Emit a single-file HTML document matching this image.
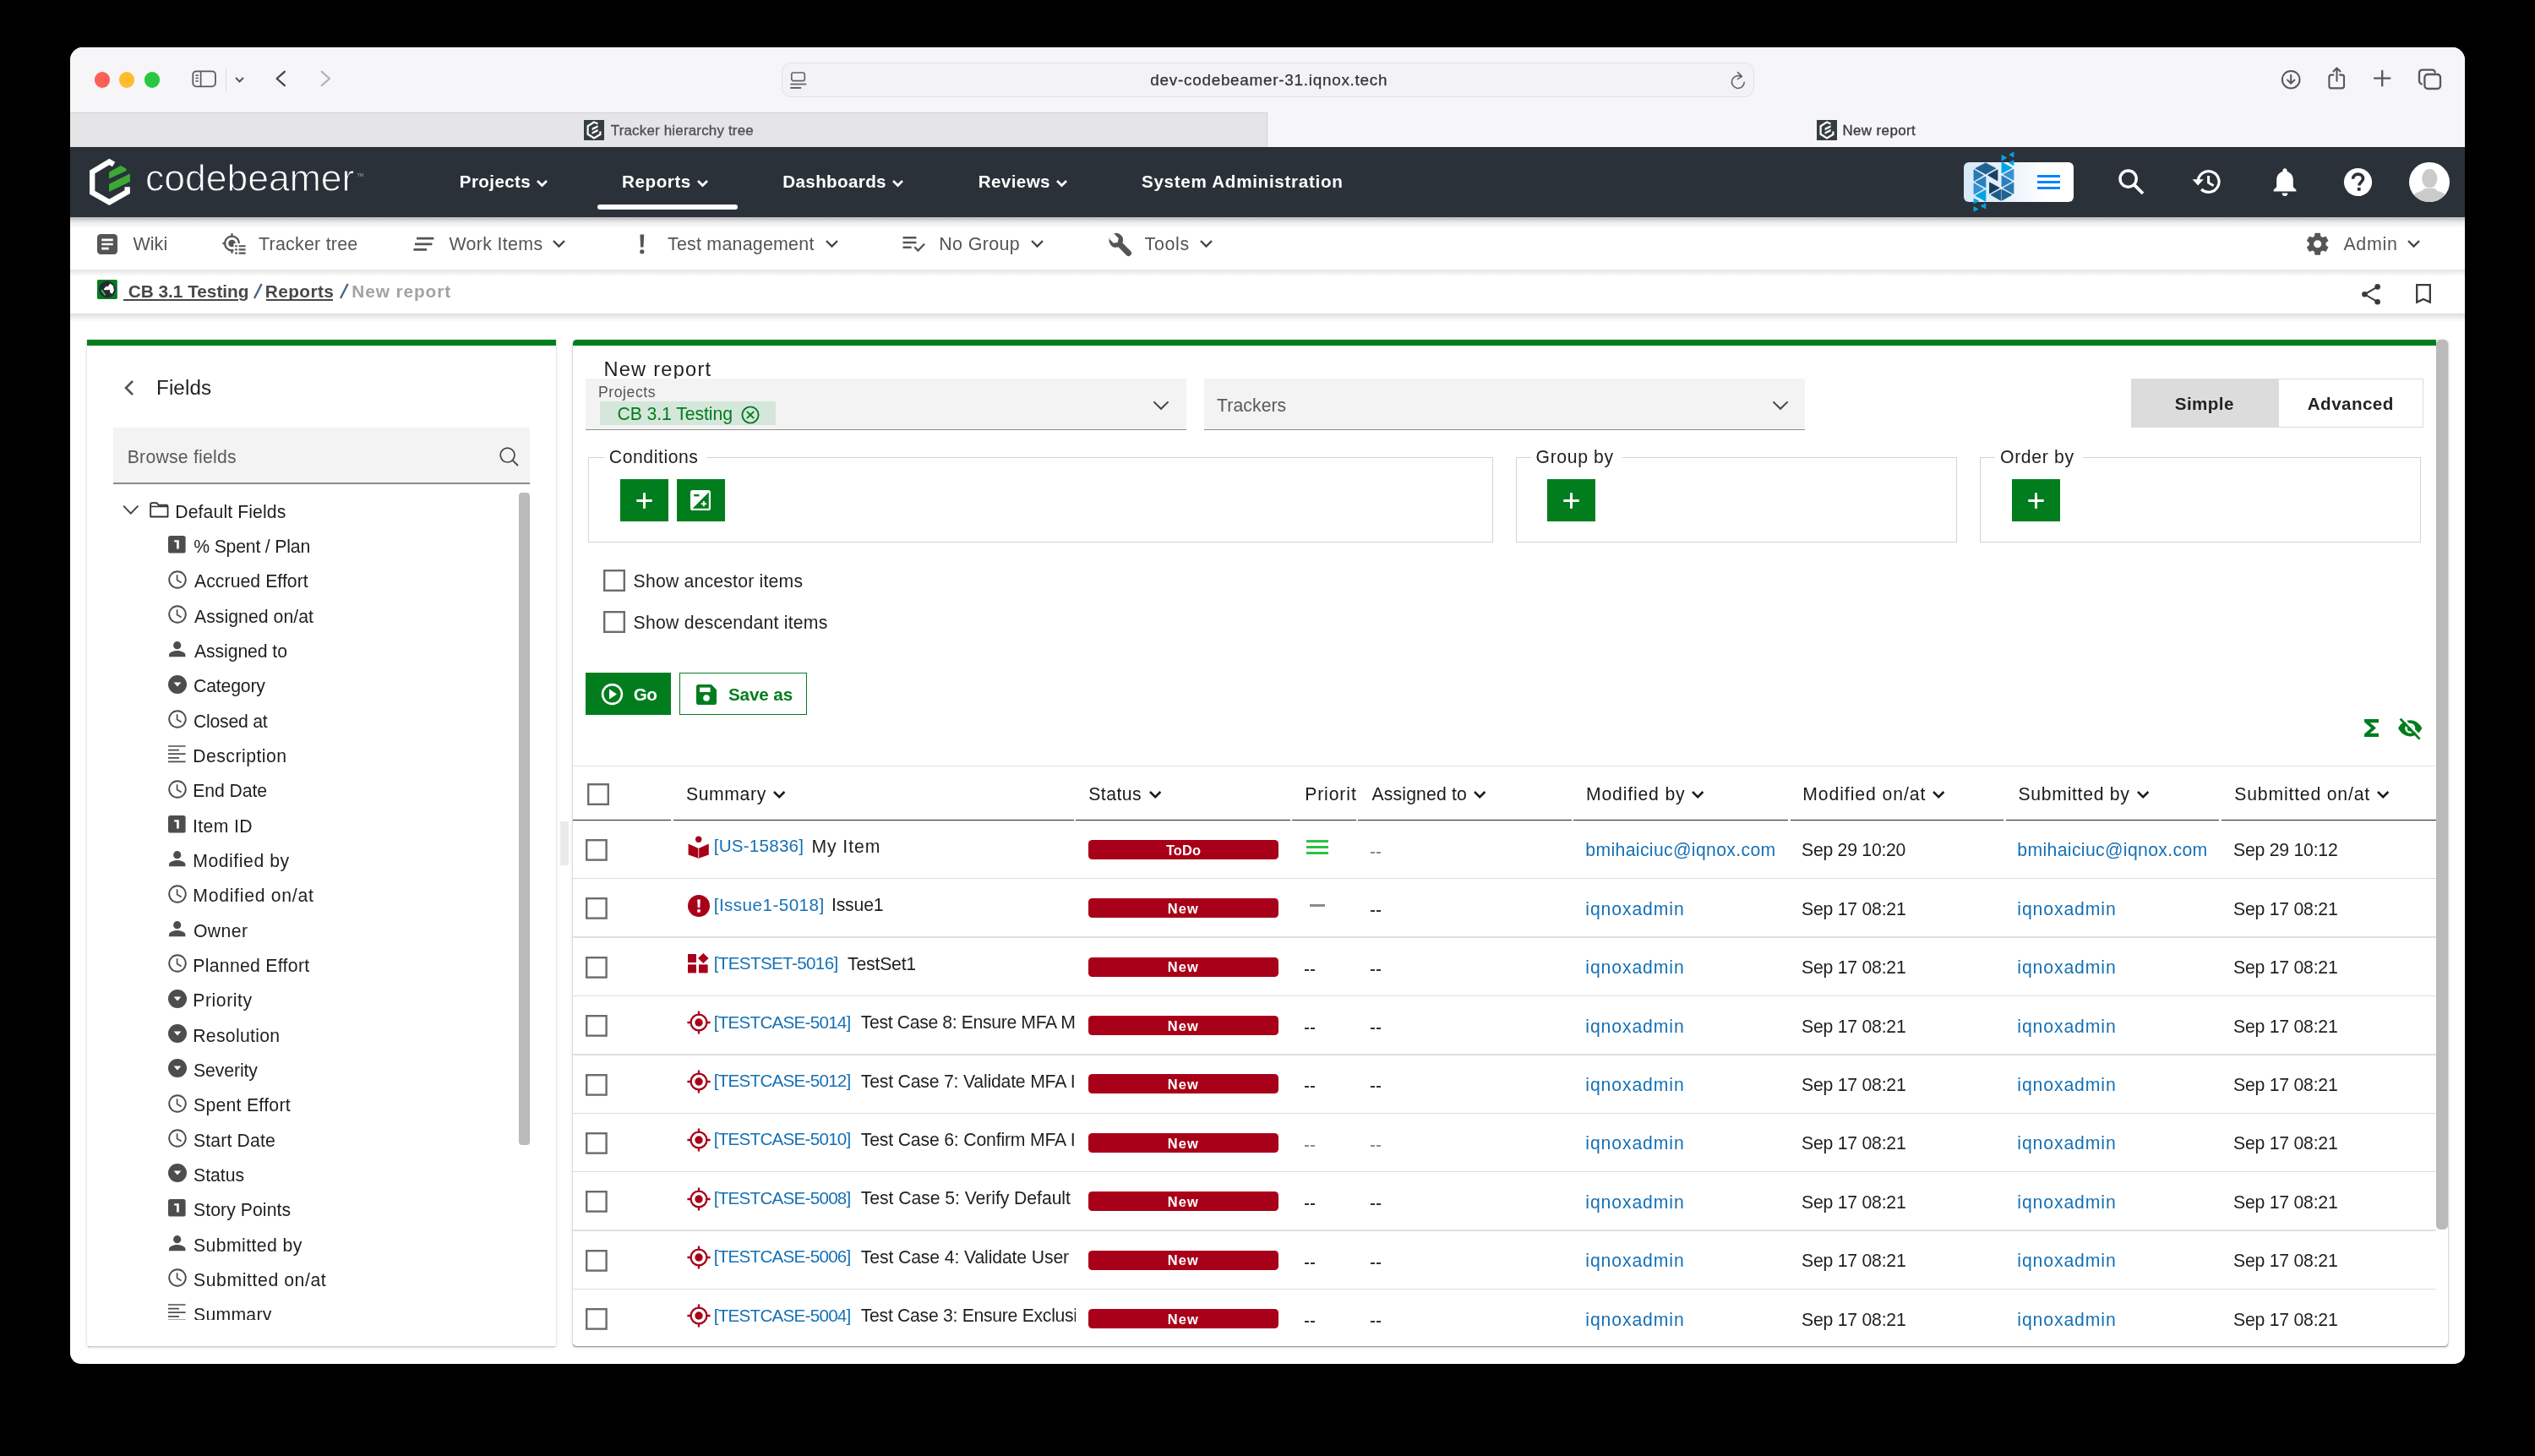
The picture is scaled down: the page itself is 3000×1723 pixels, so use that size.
<!DOCTYPE html>
<html><head><meta charset="utf-8"><title>New report</title><style>
*{box-sizing:border-box;margin:0;padding:0}
html,body{width:3000px;height:1723px;background:#000;overflow:hidden}
body{font-family:"Liberation Sans",sans-serif;font-size:21.2px;color:#222;position:relative}
#win{position:absolute;left:83px;top:56px;width:2834px;height:1557.7px;overflow:hidden;border-radius:15px 15px 13px 13px;background:#fff}
#pg{position:absolute;left:-83px;top:-56px;width:3000px;height:1723px;will-change:transform}
#pg div,#pg span,#pg svg{position:absolute}
#pg svg{overflow:visible}
.t{white-space:nowrap;line-height:1}
.b{font-weight:bold}
</style></head>
<body><div id="win"><div id="pg">
<div style="left:83px;top:56px;width:2834px;height:77px;background:#f6f5f7"></div>
<div style="left:83px;top:133px;width:2834px;height:41px;background:#f6f5f7"></div>
<div style="left:83px;top:133px;width:1417px;height:41px;background:#e5e4e6;border-top:1px solid #d2d1d3;border-right:1px solid #cfced0"></div>
<div style="left:83px;top:174px;width:2834px;height:83px;background:#2b3139"></div>
<div style="left:83px;top:257px;width:2834px;height:62px;background:#fff"></div>
<div style="left:83px;top:319px;width:2834px;height:52px;background:#fff"></div>
<div style="left:111.5px;top:85.2px;width:18.4px;height:18.4px;border-radius:50%;background:#fe5f57"></div>
<div style="left:141.10000000000002px;top:85.2px;width:18.4px;height:18.4px;border-radius:50%;background:#febc2e"></div>
<div style="left:170.60000000000002px;top:85.2px;width:18.4px;height:18.4px;border-radius:50%;background:#28c840"></div>
<svg style="left:227px;top:83px;" width="30" height="21" viewBox="0 0 30 21" preserveAspectRatio="none"><rect x="1.3" y="1.3" width="26.6" height="18" rx="4" fill="none" stroke="#5a5a5c" stroke-width="1.8"/><path d="M10.6 1.5V19.5" stroke="#5a5a5c" stroke-width="1.7"/><path d="M4.4 6.2h3.4M4.4 9.6h3.4M4.4 13h3.4" stroke="#555" stroke-width="1.5"/></svg>
<div style="left:266.6px;top:81.5px;width:1px;height:26px;background:#dcdbdd"></div>
<svg style="left:276.5px;top:90.35px;" width="13" height="8.5" viewBox="0 0 13 8.5" preserveAspectRatio="none"><path d="M2 2 L6.5 6.5 L11 2" fill="none" stroke="#555" stroke-width="2" stroke-linecap="butt" stroke-linejoin="miter"/></svg>
<svg style="left:324px;top:82px;" width="18" height="22" viewBox="0 0 18 22" preserveAspectRatio="none"><path d="M12.8 2.8 L3.6 11 L12.8 19.2" fill="none" stroke="#444" stroke-width="2.3" stroke-linecap="round" stroke-linejoin="round"/></svg>
<svg style="left:377px;top:82px;" width="18" height="22" viewBox="0 0 18 22" preserveAspectRatio="none"><path d="M3.8 2.8 L13 11 L3.8 19.2" fill="none" stroke="#b3b3b5" stroke-width="2.3" stroke-linecap="round" stroke-linejoin="round"/></svg>
<div style="left:924.5px;top:74px;width:1151px;height:40.6px;background:#f3f2f4;border:1px solid #e1e0e2;border-radius:11px"></div>
<svg style="left:935px;top:85px;" width="20" height="21" viewBox="0 0 20 21" preserveAspectRatio="none"><rect x="1.8" y="1" width="15.5" height="9.6" rx="2.2" fill="none" stroke="#666" stroke-width="1.7"/><path d="M1 14.6h17.6M1 19h11.5" stroke="#666" stroke-width="1.8" stroke-linecap="round"/></svg>
<span class="t" style="left:1361.35px;top:86.35px;font-size:18.9px;color:#333;letter-spacing:0.728px;-webkit-text-stroke:0.25px #333">dev-codebeamer-31.iqnox.tech</span>
<svg style="left:2046px;top:84px;" width="22" height="24" viewBox="0 0 22 24" preserveAspectRatio="none"><path d="M18.2 13.2a7.4 7.4 0 1 1-3.4-6.4" fill="none" stroke="#666" stroke-width="1.6" stroke-linecap="round"/><path d="M10.6 1.6 L15.4 6.4 L10.4 9.6" fill="none" stroke="#666" stroke-width="1.6" stroke-linecap="round" stroke-linejoin="round"/></svg>
<svg style="left:2698px;top:80.5px;" width="26" height="26" viewBox="0 0 26 26" preserveAspectRatio="none"><circle cx="13.200" cy="13.200" r="10.300" fill="none" stroke="#58585a" stroke-width="2"/><path d="M13.200 7.800v9.600M9 13.600l4.200 4.200 4.200-4.200" fill="none" stroke="#58585a" stroke-width="2" stroke-linecap="round" stroke-linejoin="round"/></svg>
<svg style="left:2754px;top:76px;" width="24" height="32" viewBox="0 0 24 32" preserveAspectRatio="none"><path d="M7.400 12.600H4.800a2.400 2.400 0 0 0-2.400 2.400v11a2.400 2.400 0 0 0 2.400 2.400h12.800a2.400 2.400 0 0 0 2.400-2.400v-11a2.400 2.400 0 0 0-2.400-2.400h-2.600" fill="none" stroke="#58585a" stroke-width="2.100" stroke-linecap="round"/><path d="M11.500 19.800V5M7.500 8.600l4-4 4 4" fill="none" stroke="#58585a" stroke-width="2.100" stroke-linecap="round" stroke-linejoin="round"/></svg>
<svg style="left:2809px;top:83.4px;" width="20" height="20" viewBox="0 0 20 20" preserveAspectRatio="none"><path d="M10.200 1v17.600M1 9.600h18.400" stroke="#58585a" stroke-width="2.300" stroke-linecap="round"/></svg>
<svg style="left:2861px;top:80px;" width="30" height="28" viewBox="0 0 30 28" preserveAspectRatio="none"><rect x="8.400" y="8" width="18.600" height="17" rx="3.600" fill="#f6f5f7" stroke="#58585a" stroke-width="2.300"/><path d="M5.800 19.600h-0.200a3.600 3.600 0 0 1-3.600-3.600V6.200a3.600 3.600 0 0 1 3.600-3.600h11.600a3.600 3.600 0 0 1 3.600 3.600v0.400" fill="none" stroke="#58585a" stroke-width="2.300"/></svg>
<svg style="left:691px;top:142px;" width="24" height="24" viewBox="0 0 24 24" preserveAspectRatio="none"><rect width="24" height="24" fill="#343d41"/><path d="M16.5 4.6 12 2.6 4.6 7.2v9.6L12 21.4l7.4-4.4v-3.4" fill="none" stroke="#fff" stroke-width="2.2" stroke-linejoin="miter"/><path d="M9.6 9.6l7-3.4v2.6l-7 3.4zM9.6 14.2l7-3.4v2.6l-7 3.4z" fill="#fff"/></svg>
<span class="t" style="left:722.75px;top:147.15px;font-size:16.9px;color:#4f4f51;letter-spacing:0.207px;-webkit-text-stroke:0.35px #4f4f51">Tracker hierarchy tree</span>
<svg style="left:2150px;top:142px;" width="24" height="24" viewBox="0 0 24 24" preserveAspectRatio="none"><rect width="24" height="24" fill="#343d41"/><path d="M16.5 4.6 12 2.6 4.6 7.2v9.6L12 21.4l7.4-4.4v-3.4" fill="none" stroke="#fff" stroke-width="2.2" stroke-linejoin="miter"/><path d="M9.6 9.6l7-3.4v2.6l-7 3.4zM9.6 14.2l7-3.4v2.6l-7 3.4z" fill="#fff"/></svg>
<span class="t" style="left:2180.45px;top:147.15px;font-size:16.9px;color:#3c3c3e;letter-spacing:0.411px;-webkit-text-stroke:0.35px #3c3c3e">New report</span>
<svg style="left:90px;top:175px;" width="360" height="80" viewBox="0 0 2535 563" preserveAspectRatio="none"><path d="M314 138 277 116 135 201V372L277 452 427.500 367V325" fill="none" stroke="#fff" stroke-width="45" stroke-linejoin="miter"/><path d="M275 203 372 147 418 172V192L275 257z" fill="#3aaa35"/><path d="M275 300 450 214V282L275 366z" fill="#3aaa35"/></svg>
<span class="t" style="left:172.31386861313868px;top:190.40px;font-size:43.6px;color:#fff;transform:scaleX(1.0206);transform-origin:0 50%;-webkit-text-stroke:0.95px #2b3139">codebeamer</span>
<span class="t" style="left:422.4px;top:204.80px;font-size:5.6px;color:#9aa0a6;letter-spacing:0">TM</span>
<span class="t" style="left:543.85px;top:205.20px;font-size:20.6px;color:#fff;letter-spacing:0.386px;font-weight:bold;">Projects</span>
<svg style="left:633.7px;top:211.55px;" width="15" height="9.5" viewBox="0 0 15 9.5" preserveAspectRatio="none"><path d="M2 2 L7.5 7.5 L13 2" fill="none" stroke="#fff" stroke-width="2.7" stroke-linecap="butt" stroke-linejoin="miter"/></svg>
<span class="t" style="left:736.05px;top:205.20px;font-size:20.6px;color:#fff;letter-spacing:0.567px;font-weight:bold;">Reports</span>
<svg style="left:823.5px;top:211.55px;" width="15" height="9.5" viewBox="0 0 15 9.5" preserveAspectRatio="none"><path d="M2 2 L7.5 7.5 L13 2" fill="none" stroke="#fff" stroke-width="2.7" stroke-linecap="butt" stroke-linejoin="miter"/></svg>
<span class="t" style="left:926.35px;top:205.20px;font-size:20.6px;color:#fff;letter-spacing:0.35px;font-weight:bold;">Dashboards</span>
<svg style="left:1055.1px;top:211.55px;" width="15" height="9.5" viewBox="0 0 15 9.5" preserveAspectRatio="none"><path d="M2 2 L7.5 7.5 L13 2" fill="none" stroke="#fff" stroke-width="2.7" stroke-linecap="butt" stroke-linejoin="miter"/></svg>
<span class="t" style="left:1157.65px;top:205.20px;font-size:20.6px;color:#fff;letter-spacing:0.408px;font-weight:bold;">Reviews</span>
<svg style="left:1248.9px;top:211.55px;" width="15" height="9.5" viewBox="0 0 15 9.5" preserveAspectRatio="none"><path d="M2 2 L7.5 7.5 L13 2" fill="none" stroke="#fff" stroke-width="2.7" stroke-linecap="butt" stroke-linejoin="miter"/></svg>
<span class="t" style="left:1351.0px;top:205.20px;font-size:20.6px;color:#fff;letter-spacing:0.717px;font-weight:bold;">System Administration</span>
<div style="left:707.3px;top:242.3px;width:165.7px;height:5.6px;background:#fff;border-radius:3px"></div>
<div style="left:2323.9px;top:191.7px;width:130.2px;height:47.7px;background:linear-gradient(90deg,#d6e8f7 0%,#e4f0fa 35%,#fff 75%);border-radius:6px"></div>
<svg style="left:2310px;top:175px;" width="160" height="80" viewBox="0 0 2535 1268" preserveAspectRatio="none"><polygon points="440,385 632,285 632,490" fill="#22618f" stroke="#22618f" stroke-width="14" stroke-linejoin="round"/><polygon points="412,410 412,620 590,515" fill="#2a78b0" stroke="#2a78b0" stroke-width="14" stroke-linejoin="round"/><polygon points="632,540 632,745 440,640" fill="#2a80bd" stroke="#2a80bd" stroke-width="14" stroke-linejoin="round"/><polygon points="412,665 412,870 590,770" fill="#3590cf" stroke="#3590cf" stroke-width="14" stroke-linejoin="round"/><polygon points="632,790 632,1000 440,895" fill="#00a4e4" stroke="#00a4e4" stroke-width="14" stroke-linejoin="round"/><polygon points="632,285 820,385 632,490" fill="#22618f" stroke="#22618f" stroke-width="14" stroke-linejoin="round"/><polygon points="855,410 855,615 675,510" fill="#17405f" stroke="#17405f" stroke-width="14" stroke-linejoin="round"/><polygon points="705,650 705,855 890,750" fill="#17405f" stroke="#17405f" stroke-width="14" stroke-linejoin="round"/><polygon points="915,780 915,985 730,880" fill="#1f5a88" stroke="#1f5a88" stroke-width="14" stroke-linejoin="round"/><polygon points="935,270 935,475 1125,375" fill="#00a4e4" stroke="#00a4e4" stroke-width="14" stroke-linejoin="round"/><polygon points="1155,400 1155,605 965,500" fill="#3590cf" stroke="#3590cf" stroke-width="14" stroke-linejoin="round"/><polygon points="935,525 935,730 1125,630" fill="#2a80bd" stroke="#2a80bd" stroke-width="14" stroke-linejoin="round"/><polygon points="1155,650 1155,860 965,755" fill="#2a78b0" stroke="#2a78b0" stroke-width="14" stroke-linejoin="round"/><polygon points="935,780 935,985 1125,880" fill="#22618f" stroke="#22618f" stroke-width="14" stroke-linejoin="round"/><polygon points="935,135 935,240 1025,185" fill="#00a4e4" stroke="#00a4e4" stroke-width="14" stroke-linejoin="round"/><polygon points="1155,80 1155,175 1078,128" fill="#00a4e4" stroke="#00a4e4" stroke-width="14" stroke-linejoin="round"/><polygon points="1155,230 1155,330 1070,280" fill="#00a4e4" stroke="#00a4e4" stroke-width="14" stroke-linejoin="round"/><polygon points="412,950 412,1045 500,995" fill="#00a4e4" stroke="#00a4e4" stroke-width="14" stroke-linejoin="round"/><polygon points="632,1045 632,1140 540,1090" fill="#00a4e4" stroke="#00a4e4" stroke-width="14" stroke-linejoin="round"/><polygon points="412,1105 412,1190 490,1150" fill="#00a4e4" stroke="#00a4e4" stroke-width="14" stroke-linejoin="round"/></svg>
<div style="left:2411px;top:207px;width:27px;height:3px;background:#0a84ff"></div>
<div style="left:2411px;top:214px;width:27px;height:3px;background:#0a84ff"></div>
<div style="left:2411px;top:221px;width:27px;height:3px;background:#0a84ff"></div>
<svg style="left:2505px;top:198px;" width="34" height="34" viewBox="0 0 34 34" preserveAspectRatio="none"><circle cx="13.6" cy="13.6" r="9.6" fill="none" stroke="#fff" stroke-width="3.4"/><path d="M20.6 20.6 31 31" stroke="#fff" stroke-width="3.8" stroke-linecap="butt"/></svg>
<svg style="left:2593px;top:197px;" width="38" height="36" viewBox="0 0 38 36" preserveAspectRatio="none"><path d="M8.2 18a12.4 12.4 0 1 1 3.9 9" fill="none" stroke="#fff" stroke-width="3.2"/><path d="M1.6 15.2h13.2L8.2 22.4z" fill="#fff"/><path d="M20.6 11v8.2l6 3.6" fill="none" stroke="#fff" stroke-width="3"/></svg>
<svg style="left:2689px;top:197px;" width="30" height="38" viewBox="0 0 30 38" preserveAspectRatio="none"><path d="M15 2.2c-1.5 0-2.6 1.1-2.6 2.6v1.1C7.9 7.1 5.2 11 5.2 15.8v8.4L1.6 27.8v1.8h26.8v-1.8l-3.6-3.6v-8.4c0-4.8-2.7-8.7-7.2-9.9V4.8c0-1.5-1.1-2.6-2.6-2.6z" fill="#fff"/><path d="M11.6 31.6a3.4 3.4 0 0 0 6.8 0z" fill="#fff"/></svg>
<svg style="left:2773px;top:198px;" width="35" height="35" viewBox="0 0 35 35" preserveAspectRatio="none"><circle cx="17.5" cy="17.5" r="16.6" fill="#fff"/><path d="M11.6 13.8c0-3.4 2.6-5.7 6-5.7s5.9 2.2 5.9 5.2c0 4-4.6 4.4-4.6 8.2" fill="none" stroke="#2b3139" stroke-width="3.6"/><rect x="16.8" y="24" width="3.8" height="3.8" fill="#2b3139"/></svg>
<div style="left:2851.400px;top:191.500px;width:47.400px;height:47.400px;border-radius:50%;overflow:hidden;background:#fff"><svg style="left:0;top:0" width="47.400" height="47.400" viewBox="0 0 48 48"><ellipse cx="24.600" cy="19.600" rx="9.200" ry="11.400" fill="#cbcbcb"/><path d="M1 52c0-11 5-15.500 14-17.500l3.600-3h12l3.600 3c9 2 14 6.500 14 17.500z" fill="#cbcbcb"/></svg></div>
<div style="left:83px;top:257px;width:2834px;height:13px;background:linear-gradient(#00000047,#00000014 45%,#0000)"></div>
<svg style="left:115px;top:276.6px;" width="24" height="24" viewBox="0 0 25.6 25.6" preserveAspectRatio="none"><rect width="25.6" height="25.6" rx="4.4" fill="#555"/><path d="M5.6 7.4h14.4M5.6 12.8h14.4M5.6 18.2h9" stroke="#fff" stroke-width="2.9"/></svg>
<span class="t" style="left:157.4px;top:278.70px;font-size:21.4px;color:#555;letter-spacing:0.117px;">Wiki</span>
<svg style="left:263px;top:275px;" width="28" height="26" viewBox="0 0 28 26" preserveAspectRatio="none"><circle cx="11.5" cy="13" r="8.4" fill="none" stroke="#555" stroke-width="2.3"/><path d="M11.5 1.2v4M11.5 20.8v4M0.4 13h3.6" stroke="#555" stroke-width="2.3"/><circle cx="11.5" cy="13" r="4.3" fill="#555"/><rect x="13.5" y="13" width="15" height="13" fill="#fff"/><path d="M15.2 16.2h2.6M19.6 16.2h8M15.2 20.4h2.6M19.6 20.4h8M15.2 24.6h2.6M19.6 24.6h8" stroke="#555" stroke-width="2.1"/></svg>
<span class="t" style="left:306.0px;top:278.70px;font-size:21.4px;color:#555;letter-spacing:0.25px;">Tracker tree</span>
<svg style="left:488.5px;top:279.5px;" width="25" height="18" viewBox="0 0 25 18" preserveAspectRatio="none"><path d="M4 2.2h20.4M2 8.8h20.4M0.4 15.4h15.6" stroke="#555" stroke-width="2.7"/></svg>
<span class="t" style="left:531.4px;top:278.70px;font-size:21.4px;color:#555;letter-spacing:0.333px;">Work Items</span>
<svg style="left:653.3px;top:282.54999999999995px;" width="17" height="10.5" viewBox="0 0 17 10.5" preserveAspectRatio="none"><path d="M2 2 L8.5 8.5 L15 2" fill="none" stroke="#444" stroke-width="2.4" stroke-linecap="butt" stroke-linejoin="miter"/></svg>
<svg style="left:755.6px;top:276.6px;" width="7.6" height="23.6" viewBox="0 0 7.6 23.6" preserveAspectRatio="none"><path d="M1.400 0.400h4.800l-0.700 15.200h-3.400z" fill="#555"/><circle cx="3.800" cy="20.800" r="2.600" fill="#555"/></svg>
<span class="t" style="left:790.0px;top:278.70px;font-size:21.4px;color:#555;letter-spacing:0.236px;">Test management</span>
<svg style="left:975.5px;top:282.54999999999995px;" width="17" height="10.5" viewBox="0 0 17 10.5" preserveAspectRatio="none"><path d="M2 2 L8.5 8.5 L15 2" fill="none" stroke="#444" stroke-width="2.4" stroke-linecap="butt" stroke-linejoin="miter"/></svg>
<svg style="left:1067.6px;top:279.4px;" width="27.4" height="19.6" viewBox="0 0 30 21" preserveAspectRatio="none"><path d="M0.6 2.4h17.4M0.6 8.6h17.4M0.6 14.8h11" stroke="#555" stroke-width="2.6"/><path d="M15.6 14.2l4.6 4.6 8.4-8.6" fill="none" stroke="#555" stroke-width="2.6"/></svg>
<span class="t" style="left:1111.25px;top:278.70px;font-size:21.4px;color:#555;letter-spacing:0.379px;">No Group</span>
<svg style="left:1219.3px;top:282.54999999999995px;" width="17" height="10.5" viewBox="0 0 17 10.5" preserveAspectRatio="none"><path d="M2 2 L8.5 8.5 L15 2" fill="none" stroke="#444" stroke-width="2.4" stroke-linecap="butt" stroke-linejoin="miter"/></svg>
<svg style="left:1307.5px;top:271.5px;" width="33" height="33" viewBox="0 0 30 30" preserveAspectRatio="none"><g transform="rotate(-45 15 15)"><path d="M15 1.2a7.4 7.4 0 0 0-3.2 14v12.4a3.2 3.2 0 0 0 6.4 0V15.2a7.4 7.4 0 0 0 0.6-13.6v7.2l-3.8 2.4-3.8-2.4V1.6z" fill="#555" transform="translate(0 1.5)"/></g></svg>
<span class="t" style="left:1354.5px;top:278.70px;font-size:21.4px;color:#555;letter-spacing:0.688px;">Tools</span>
<svg style="left:1418.5px;top:282.54999999999995px;" width="17" height="10.5" viewBox="0 0 17 10.5" preserveAspectRatio="none"><path d="M2 2 L8.5 8.5 L15 2" fill="none" stroke="#444" stroke-width="2.4" stroke-linecap="butt" stroke-linejoin="miter"/></svg>
<svg style="left:2729.6px;top:276.2px;" width="25.6" height="25.6" viewBox="0 0 28 28" preserveAspectRatio="none"><path d="M24.5 15.4c.06-.45.09-.92.09-1.4s-.03-.95-.1-1.4l3-2.36a.72.72 0 0 0 .17-.92l-2.85-4.94a.72.72 0 0 0-.88-.31l-3.55 1.43a10.4 10.4 0 0 0-2.41-1.4L17.43.3a.72.72 0 0 0-.71-.6h-5.7a.72.72 0 0 0-.71.6l-.54 3.78c-.87.36-1.67.84-2.41 1.4L3.8 4.07a.72.72 0 0 0-.88.31L.08 9.32a.7.7 0 0 0 .17.92l3 2.36c-.06.45-.1.93-.1 1.4s.04.95.1 1.4l-3 2.36a.72.72 0 0 0-.17.92l2.85 4.94c.17.31.55.43.88.31l3.55-1.43c.74.57 1.54 1.04 2.41 1.4l.54 3.78c.05.34.35.6.71.6h5.7c.36 0 .66-.26.71-.6l.54-3.78c.87-.36 1.67-.83 2.41-1.4l3.55 1.43c.33.12.71 0 .88-.31l2.85-4.94a.72.72 0 0 0-.17-.92zM13.87 19a5 5 0 1 1 0-10 5 5 0 0 1 0 10z" fill="#555"/></svg>
<span class="t" style="left:2773.4px;top:278.70px;font-size:21.4px;color:#555;letter-spacing:0.713px;">Admin</span>
<svg style="left:2847.5px;top:282.54999999999995px;" width="17" height="10.5" viewBox="0 0 17 10.5" preserveAspectRatio="none"><path d="M2 2 L8.5 8.5 L15 2" fill="none" stroke="#444" stroke-width="2.4" stroke-linecap="butt" stroke-linejoin="miter"/></svg>
<div style="left:83px;top:319px;width:2834px;height:8px;background:linear-gradient(#0000001c,#0000)"></div>
<div style="left:83px;top:371px;width:2834px;height:10px;background:linear-gradient(#00000022,#0000000d 55%,#0000)"></div>
<svg style="left:100px;top:320px;" width="200" height="50" viewBox="0 0 2535 634" preserveAspectRatio="none"><rect x="190" y="140" width="302" height="290" rx="20" fill="#027d1e"/><circle cx="341" cy="285" r="125" fill="#232b33"/><path d="M288 278 330 236 346 246 386 196 432 236 442 300 416 352 380 330V292L300 296z" fill="#fff"/><path d="M243 300 266 288 322 368 300 378z" fill="#4cb85a"/></svg>
<span class="t" style="left:151.75px;top:335.30px;font-size:20.8px;color:#484848;letter-spacing:-0.012px;font-weight:bold;">CB 3.1 Testing</span>
<div style="left:146.2px;top:354.1px;width:135.4px;height:1.8px;background:#484848"></div>
<span class="t" style="left:313.75px;top:335.30px;font-size:20.8px;color:#484848;letter-spacing:0.417px;font-weight:bold;">Reports</span>
<div style="left:314.8px;top:354.1px;width:79.2px;height:1.8px;background:#484848"></div>
<svg style="left:298.5px;top:334.5px;" width="13" height="19" viewBox="0 0 13 19" preserveAspectRatio="none"><path d="M10.6 1 2 18" stroke="#4a6785" stroke-width="2.4"/></svg>
<svg style="left:401px;top:334.5px;" width="13" height="19" viewBox="0 0 13 19" preserveAspectRatio="none"><path d="M10.6 1 2 18" stroke="#4a6785" stroke-width="2.4"/></svg>
<span class="t" style="left:416.35px;top:335.30px;font-size:20.8px;color:#a3a3a3;letter-spacing:0.906px;font-weight:bold;">New report</span>
<svg style="left:2793px;top:334.5px;" width="27" height="27" viewBox="0 0 27 27" preserveAspectRatio="none"><circle cx="20.600" cy="4.400" r="3.300" fill="#3a3a3a"/><circle cx="20.600" cy="22.200" r="3.300" fill="#3a3a3a"/><circle cx="5.400" cy="13.300" r="3.300" fill="#3a3a3a"/><path d="M20.600 4.400 5.400 13.300 20.600 22.200" fill="none" stroke="#3a3a3a" stroke-width="2"/></svg>
<svg style="left:2859.4px;top:336.4px;" width="18" height="24" viewBox="0 0 18 24" preserveAspectRatio="none"><path d="M1.200 1.200h15.600v20.400l-7.800-3.600-7.800 3.600z" fill="none" stroke="#3a3a3a" stroke-width="2.300" stroke-linejoin="miter"/></svg>
<div style="left:103px;top:402px;width:555px;height:1191px;background:#fff;box-shadow:0 1.600px 1.500px -0.800px #00000066,0 1px 4px #00000026,0 0 3px #00000012"></div>
<div style="left:103px;top:402px;width:555px;height:7px;background:#027d1e"></div>
<svg style="left:144.5px;top:447.5px;" width="16" height="22" viewBox="0 0 16 22" preserveAspectRatio="none"><path d="M12 3 4 11l8 8" fill="none" stroke="#555" stroke-width="2.6"/></svg>
<span class="t" style="left:185.0px;top:446.80px;font-size:24.2px;color:#222;letter-spacing:0.11px;">Fields</span>
<div style="left:134px;top:506px;width:493px;height:66.5px;background:#f3f3f3;border-bottom:2px solid #8c8c8c"></div>
<span class="t" style="left:150.75px;top:530.40px;font-size:21.2px;color:#5a5a5a;letter-spacing:0.229px;">Browse fields</span>
<svg style="left:591px;top:529px;" width="24" height="24" viewBox="0 0 24 24" preserveAspectRatio="none"><circle cx="9.6" cy="9.6" r="8.4" fill="none" stroke="#444" stroke-width="1.7"/><path d="M15.8 15.8 22 22" stroke="#444" stroke-width="1.9"/></svg>
<div style="left:614px;top:583px;width:12.8px;height:772px;background:#bababa;border-radius:4px"></div>
<div style="left:663px;top:972px;width:10px;height:52px;background:#ebebeb"></div>
<div style="left:103px;top:583px;width:510px;height:979px;overflow:hidden"><div style="left:-103px;top:-583px;width:700px;height:1600px">
<svg style="left:144.5px;top:597px;" width="20" height="13" viewBox="0 0 20 13" preserveAspectRatio="none"><path d="M1.2 1.6 9.8 10.6 18.4 1.6" fill="none" stroke="#444" stroke-width="2"/></svg>
<svg style="left:177.4px;top:593.5px;" width="22.6" height="19" viewBox="0 0 23.5 19.5" preserveAspectRatio="none"><path d="M1.2 18V3.2c0-1 .8-2 2-2h5.6l2.2 2.6h9.6c1 0 1.8.8 1.8 1.8V18z" fill="none" stroke="#333" stroke-width="1.9" stroke-linejoin="round"/><path d="M1.2 5.6h21" stroke="#333" stroke-width="1.6"/></svg>
<span class="t" style="left:207.25px;top:595.00px;font-size:21.2px;color:#1f1f1f;letter-spacing:0.119px;">Default Fields</span>
<svg style="left:199.4px;top:634.1px;" width="20.6" height="20.6" viewBox="0 0 20.6 20.6" preserveAspectRatio="none"><rect width="20.6" height="20.6" rx="2.6" fill="#4d4d4d"/><path d="M7.2 5.2h5.6v10.4h-2.7v-8h-2.9z" fill="#fff"/></svg>
<span class="t" style="left:229.25px;top:635.90px;font-size:21.2px;color:#1f1f1f;letter-spacing:-0.173px;">% Spent / Plan</span>
<svg style="left:199px;top:674.83px;" width="22" height="22" viewBox="0 0 22 22" preserveAspectRatio="none"><circle cx="11" cy="11" r="9.8" fill="none" stroke="#4d4d4d" stroke-width="1.9"/><path d="M10.6 5.2v6.4l5 2.9" fill="none" stroke="#4d4d4d" stroke-width="1.7"/></svg>
<span class="t" style="left:230.0px;top:677.23px;font-size:21.2px;color:#1f1f1f;letter-spacing:0.065px;">Accrued Effort</span>
<svg style="left:199px;top:716.16px;" width="22" height="22" viewBox="0 0 22 22" preserveAspectRatio="none"><circle cx="11" cy="11" r="9.8" fill="none" stroke="#4d4d4d" stroke-width="1.9"/><path d="M10.6 5.2v6.4l5 2.9" fill="none" stroke="#4d4d4d" stroke-width="1.7"/></svg>
<span class="t" style="left:230.0px;top:718.56px;font-size:21.2px;color:#1f1f1f;letter-spacing:0.062px;">Assigned on/at</span>
<svg style="left:200.3px;top:758.89px;" width="19.4" height="18.4" viewBox="0 0 19.4 18.4" preserveAspectRatio="none"><circle cx="9.7" cy="4.7" r="4.6" fill="#4d4d4d"/><path d="M0 18.2v-2.4c0-3.2 6.4-4.9 9.7-4.9s9.7 1.7 9.7 4.9v2.4z" fill="#4d4d4d"/></svg>
<span class="t" style="left:230.0px;top:759.89px;font-size:21.2px;color:#1f1f1f;letter-spacing:-0.08px;">Assigned to</span>
<svg style="left:199px;top:798.8199999999999px;" width="22" height="22" viewBox="0 0 22 22" preserveAspectRatio="none"><circle cx="11" cy="11" r="11" fill="#4d4d4d"/><path d="M6.6 8.6h8.8l-4.4 4.8z" fill="#fff"/></svg>
<span class="t" style="left:229.0px;top:801.22px;font-size:21.2px;color:#1f1f1f;letter-spacing:-0.157px;">Category</span>
<svg style="left:199px;top:840.15px;" width="22" height="22" viewBox="0 0 22 22" preserveAspectRatio="none"><circle cx="11" cy="11" r="9.8" fill="none" stroke="#4d4d4d" stroke-width="1.9"/><path d="M10.6 5.2v6.4l5 2.9" fill="none" stroke="#4d4d4d" stroke-width="1.7"/></svg>
<span class="t" style="left:229.0px;top:842.55px;font-size:21.2px;color:#1f1f1f;letter-spacing:-0.225px;">Closed at</span>
<svg style="left:199.4px;top:881.88px;" width="21" height="21" viewBox="0 0 21 21" preserveAspectRatio="none"><path d="M0 1h20.6M0 5.6h13M0 10.2h20.6M0 14.8h13M0 19.4h20.6" stroke="#4d4d4d" stroke-width="1.7"/></svg>
<span class="t" style="left:228.25px;top:883.88px;font-size:21.2px;color:#1f1f1f;letter-spacing:0.48px;">Description</span>
<svg style="left:199px;top:922.81px;" width="22" height="22" viewBox="0 0 22 22" preserveAspectRatio="none"><circle cx="11" cy="11" r="9.8" fill="none" stroke="#4d4d4d" stroke-width="1.9"/><path d="M10.6 5.2v6.4l5 2.9" fill="none" stroke="#4d4d4d" stroke-width="1.7"/></svg>
<span class="t" style="left:228.25px;top:925.21px;font-size:21.2px;color:#1f1f1f;letter-spacing:-0.064px;">End Date</span>
<svg style="left:199.4px;top:964.74px;" width="20.6" height="20.6" viewBox="0 0 20.6 20.6" preserveAspectRatio="none"><rect width="20.6" height="20.6" rx="2.6" fill="#4d4d4d"/><path d="M7.2 5.2h5.6v10.4h-2.7v-8h-2.9z" fill="#fff"/></svg>
<span class="t" style="left:228.0px;top:966.54px;font-size:21.2px;color:#1f1f1f;letter-spacing:0.383px;">Item ID</span>
<svg style="left:200.3px;top:1006.87px;" width="19.4" height="18.4" viewBox="0 0 19.4 18.4" preserveAspectRatio="none"><circle cx="9.7" cy="4.7" r="4.6" fill="#4d4d4d"/><path d="M0 18.2v-2.4c0-3.2 6.4-4.9 9.7-4.9s9.7 1.7 9.7 4.9v2.4z" fill="#4d4d4d"/></svg>
<span class="t" style="left:228.25px;top:1007.87px;font-size:21.2px;color:#1f1f1f;letter-spacing:0.55px;">Modified by</span>
<svg style="left:199px;top:1046.8px;" width="22" height="22" viewBox="0 0 22 22" preserveAspectRatio="none"><circle cx="11" cy="11" r="9.8" fill="none" stroke="#4d4d4d" stroke-width="1.9"/><path d="M10.6 5.2v6.4l5 2.9" fill="none" stroke="#4d4d4d" stroke-width="1.7"/></svg>
<span class="t" style="left:228.25px;top:1049.20px;font-size:21.2px;color:#1f1f1f;letter-spacing:0.735px;">Modified on/at</span>
<svg style="left:200.3px;top:1089.53px;" width="19.4" height="18.4" viewBox="0 0 19.4 18.4" preserveAspectRatio="none"><circle cx="9.7" cy="4.7" r="4.6" fill="#4d4d4d"/><path d="M0 18.2v-2.4c0-3.2 6.4-4.9 9.7-4.9s9.7 1.7 9.7 4.9v2.4z" fill="#4d4d4d"/></svg>
<span class="t" style="left:229.0px;top:1090.53px;font-size:21.2px;color:#1f1f1f;letter-spacing:0.387px;">Owner</span>
<svg style="left:199px;top:1129.46px;" width="22" height="22" viewBox="0 0 22 22" preserveAspectRatio="none"><circle cx="11" cy="11" r="9.8" fill="none" stroke="#4d4d4d" stroke-width="1.9"/><path d="M10.6 5.2v6.4l5 2.9" fill="none" stroke="#4d4d4d" stroke-width="1.7"/></svg>
<span class="t" style="left:228.25px;top:1131.86px;font-size:21.2px;color:#1f1f1f;letter-spacing:0.308px;">Planned Effort</span>
<svg style="left:199px;top:1170.79px;" width="22" height="22" viewBox="0 0 22 22" preserveAspectRatio="none"><circle cx="11" cy="11" r="11" fill="#4d4d4d"/><path d="M6.6 8.6h8.8l-4.4 4.8z" fill="#fff"/></svg>
<span class="t" style="left:228.25px;top:1173.19px;font-size:21.2px;color:#1f1f1f;letter-spacing:0.571px;">Priority</span>
<svg style="left:199px;top:1212.1200000000001px;" width="22" height="22" viewBox="0 0 22 22" preserveAspectRatio="none"><circle cx="11" cy="11" r="11" fill="#4d4d4d"/><path d="M6.6 8.6h8.8l-4.4 4.8z" fill="#fff"/></svg>
<span class="t" style="left:228.25px;top:1214.52px;font-size:21.2px;color:#1f1f1f;letter-spacing:0.306px;">Resolution</span>
<svg style="left:199px;top:1253.45px;" width="22" height="22" viewBox="0 0 22 22" preserveAspectRatio="none"><circle cx="11" cy="11" r="11" fill="#4d4d4d"/><path d="M6.6 8.6h8.8l-4.4 4.8z" fill="#fff"/></svg>
<span class="t" style="left:229.0px;top:1255.85px;font-size:21.2px;color:#1f1f1f;letter-spacing:-0.086px;">Severity</span>
<svg style="left:199px;top:1294.78px;" width="22" height="22" viewBox="0 0 22 22" preserveAspectRatio="none"><circle cx="11" cy="11" r="9.8" fill="none" stroke="#4d4d4d" stroke-width="1.9"/><path d="M10.6 5.2v6.4l5 2.9" fill="none" stroke="#4d4d4d" stroke-width="1.7"/></svg>
<span class="t" style="left:229.0px;top:1297.18px;font-size:21.2px;color:#1f1f1f;letter-spacing:0.282px;">Spent Effort</span>
<svg style="left:199px;top:1336.11px;" width="22" height="22" viewBox="0 0 22 22" preserveAspectRatio="none"><circle cx="11" cy="11" r="9.8" fill="none" stroke="#4d4d4d" stroke-width="1.9"/><path d="M10.6 5.2v6.4l5 2.9" fill="none" stroke="#4d4d4d" stroke-width="1.7"/></svg>
<span class="t" style="left:229.0px;top:1338.51px;font-size:21.2px;color:#1f1f1f;letter-spacing:0.15px;">Start Date</span>
<svg style="left:199px;top:1377.4399999999998px;" width="22" height="22" viewBox="0 0 22 22" preserveAspectRatio="none"><circle cx="11" cy="11" r="11" fill="#4d4d4d"/><path d="M6.6 8.6h8.8l-4.4 4.8z" fill="#fff"/></svg>
<span class="t" style="left:229.0px;top:1379.84px;font-size:21.2px;color:#1f1f1f;letter-spacing:0.02px;">Status</span>
<svg style="left:199.4px;top:1419.37px;" width="20.6" height="20.6" viewBox="0 0 20.6 20.6" preserveAspectRatio="none"><rect width="20.6" height="20.6" rx="2.6" fill="#4d4d4d"/><path d="M7.2 5.2h5.6v10.4h-2.7v-8h-2.9z" fill="#fff"/></svg>
<span class="t" style="left:229.0px;top:1421.17px;font-size:21.2px;color:#1f1f1f;letter-spacing:0.077px;">Story Points</span>
<svg style="left:200.3px;top:1461.5px;" width="19.4" height="18.4" viewBox="0 0 19.4 18.4" preserveAspectRatio="none"><circle cx="9.7" cy="4.7" r="4.6" fill="#4d4d4d"/><path d="M0 18.2v-2.4c0-3.2 6.4-4.9 9.7-4.9s9.7 1.7 9.7 4.9v2.4z" fill="#4d4d4d"/></svg>
<span class="t" style="left:229.0px;top:1462.50px;font-size:21.2px;color:#1f1f1f;letter-spacing:0.432px;">Submitted by</span>
<svg style="left:199px;top:1501.43px;" width="22" height="22" viewBox="0 0 22 22" preserveAspectRatio="none"><circle cx="11" cy="11" r="9.8" fill="none" stroke="#4d4d4d" stroke-width="1.9"/><path d="M10.6 5.2v6.4l5 2.9" fill="none" stroke="#4d4d4d" stroke-width="1.7"/></svg>
<span class="t" style="left:229.0px;top:1503.83px;font-size:21.2px;color:#1f1f1f;letter-spacing:0.596px;">Submitted on/at</span>
<svg style="left:199.4px;top:1543.16px;" width="21" height="21" viewBox="0 0 21 21" preserveAspectRatio="none"><path d="M0 1h20.6M0 5.6h13M0 10.2h20.6M0 14.8h13M0 19.4h20.6" stroke="#4d4d4d" stroke-width="1.7"/></svg>
<span class="t" style="left:229.0px;top:1545.16px;font-size:21.2px;color:#1f1f1f;letter-spacing:0.283px;">Summary</span>
</div></div>
<div style="left:678px;top:402px;width:2219px;height:1191px;background:#fff;border-radius:4.500px;box-shadow:0 1.600px 1.500px -0.800px #00000066,0 1px 4px #00000026,0 0 3px #00000012;overflow:hidden"><div style="left:0;top:0;width:2205px;height:7.2px;background:#027d1e"></div></div>
<div style="left:2883px;top:402px;width:13.6px;height:1053px;background:#bababa;border-radius:5px"></div>
<span class="t" style="left:714.45px;top:425.60px;font-size:23.6px;color:#1f1f1f;letter-spacing:1.256px;">New report</span>
<div style="left:693px;top:448.3px;width:710.7px;height:61px;background:#f3f3f3;border-bottom:1.4px solid #8c8c8c"></div>
<span class="t" style="left:708.0px;top:455.80px;font-size:17.6px;color:#555;letter-spacing:0.571px;">Projects</span>
<div style="left:710px;top:475.2px;width:208px;height:27.6px;background:#d5e7da"></div>
<span class="t" style="left:730.4px;top:479.00px;font-size:21.2px;color:#027d1e;letter-spacing:-0.065px;">CB 3.1 Testing</span>
<svg style="left:876.5px;top:479.6px;" width="22" height="22" viewBox="0 0 22 22" preserveAspectRatio="none"><circle cx="11" cy="11" r="9.6" fill="none" stroke="#027d1e" stroke-width="1.9"/><path d="M6.8 6.8l8.4 8.4M15.2 6.8l-8.4 8.4" stroke="#027d1e" stroke-width="1.9"/></svg>
<svg style="left:1364px;top:474px;" width="20" height="12" viewBox="0 0 20 12" preserveAspectRatio="none"><path d="M1.4 1.4 10 9.8 18.6 1.4" fill="none" stroke="#444" stroke-width="2"/></svg>
<div style="left:1425px;top:448.3px;width:710.8px;height:61px;background:#f3f3f3;border-bottom:1.4px solid #8c8c8c"></div>
<span class="t" style="left:1440.1px;top:469.00px;font-size:21.2px;color:#5a5a5a;letter-spacing:0.071px;">Trackers</span>
<svg style="left:2096.5px;top:474px;" width="20" height="12" viewBox="0 0 20 12" preserveAspectRatio="none"><path d="M1.4 1.4 10 9.8 18.6 1.4" fill="none" stroke="#444" stroke-width="2"/></svg>
<div style="left:2522px;top:448px;width:346px;height:57.8px;border:1.4px solid #dcdcdc;background:#fff"></div>
<div style="left:2522px;top:448px;width:175px;height:57.8px;background:#dcdcdc"></div>
<span class="t" style="left:2573.8px;top:467.90px;font-size:20.6px;color:#222;letter-spacing:0.43px;font-weight:bold;">Simple</span>
<span class="t" style="left:2730.8px;top:467.90px;font-size:20.6px;color:#222;letter-spacing:0.443px;font-weight:bold;">Advanced</span>
<div style="left:696.4px;top:540.6px;width:1070.6px;height:101.4px;border:1.5px solid #d4d4d4"></div>
<div style="left:714.8px;top:535px;width:121.5px;height:12px;background:#fff"></div>
<span class="t" style="left:720.8px;top:530.00px;font-size:21.2px;color:#1f1f1f;letter-spacing:0.556px;">Conditions</span>
<div style="left:733.9px;top:567.2px;width:57px;height:49.8px;background:#027d1e"></div>
<svg style="left:752.5px;top:583px;" width="19" height="19" viewBox="0 0 19 19" preserveAspectRatio="none"><path d="M9.5 0.300v18.400M0.300 9.500h18.400" stroke="#fff" stroke-width="3"/></svg>
<div style="left:801px;top:567.2px;width:57px;height:49.8px;background:#027d1e"></div>
<svg style="left:817.2px;top:580.1px;" width="24" height="24" viewBox="0 0 24 24" preserveAspectRatio="none"><rect x="0" y="0" width="24" height="24" rx="2.800" fill="#fff"/><path d="M21.800 2.600V21.800H2.600z" fill="#027d1e"/><path d="M4.200 6.200h6.200" stroke="#027d1e" stroke-width="2.400"/><path d="M12.800 16.200h6.200M15.900 13.100v6.200" stroke="#fff" stroke-width="1.900"/></svg>
<div style="left:1794px;top:540.6px;width:522px;height:101.4px;border:1.5px solid #d4d4d4"></div>
<div style="left:1811.6px;top:535px;width:108.3px;height:12px;background:#fff"></div>
<span class="t" style="left:1817.6px;top:530.00px;font-size:21.2px;color:#1f1f1f;letter-spacing:0.614px;">Group by</span>
<div style="left:1831px;top:567.2px;width:57px;height:49.8px;background:#027d1e"></div>
<svg style="left:1849.6px;top:583px;" width="19" height="19" viewBox="0 0 19 19" preserveAspectRatio="none"><path d="M9.5 0.300v18.400M0.300 9.500h18.400" stroke="#fff" stroke-width="3"/></svg>
<div style="left:2343px;top:540.6px;width:522px;height:101.4px;border:1.5px solid #d4d4d4"></div>
<div style="left:2361px;top:535px;width:103.8px;height:12px;background:#fff"></div>
<span class="t" style="left:2367.0px;top:530.00px;font-size:21.2px;color:#1f1f1f;letter-spacing:0.65px;">Order by</span>
<div style="left:2380.9px;top:567.2px;width:57px;height:49.8px;background:#027d1e"></div>
<svg style="left:2399.5px;top:583px;" width="19" height="19" viewBox="0 0 19 19" preserveAspectRatio="none"><path d="M9.5 0.300v18.400M0.300 9.500h18.400" stroke="#fff" stroke-width="3"/></svg>
<svg style="left:713.8px;top:674.4px;" width="26" height="26" viewBox="0 0 26 26" preserveAspectRatio="none"><rect x="1.2" y="1.2" width="23.6" height="23.6" fill="#fff" stroke="#6c6c6c" stroke-width="2.4"/></svg>
<span class="t" style="left:749.6px;top:677.00px;font-size:21.2px;color:#1f1f1f;letter-spacing:0.208px;">Show ancestor items</span>
<svg style="left:713.8px;top:723px;" width="26" height="26" viewBox="0 0 26 26" preserveAspectRatio="none"><rect x="1.2" y="1.2" width="23.6" height="23.6" fill="#fff" stroke="#6c6c6c" stroke-width="2.4"/></svg>
<span class="t" style="left:749.6px;top:725.60px;font-size:21.2px;color:#1f1f1f;letter-spacing:0.235px;">Show descendant items</span>
<div style="left:693px;top:796.2px;width:100.8px;height:49.6px;background:#027d1e"></div>
<svg style="left:711px;top:808px;" width="27" height="27" viewBox="0 0 27 27" preserveAspectRatio="none"><circle cx="13.5" cy="13.5" r="11.4" fill="none" stroke="#fff" stroke-width="2.6"/><path d="M10 7.6v11.8l9-5.9z" fill="#fff"/></svg>
<span class="t" style="left:749.65px;top:811.90px;font-size:20.6px;color:#fff;letter-spacing:-0.4px;font-weight:bold;">Go</span>
<div style="left:804px;top:796.2px;width:151px;height:49.6px;border:1.5px solid #027d1e;background:#fff"></div>
<svg style="left:824px;top:809.6px;" width="24" height="24" viewBox="0 0 24 24" preserveAspectRatio="none"><path d="M0 2.6C0 1.2 1.2 0 2.6 0h15.2L24 6.2v15.2c0 1.4-1.2 2.6-2.6 2.6H2.6C1.200 24 0 22.8 0 21.400z" fill="#027d1e"/><rect x="4" y="3.6" width="12.600" height="5.400" fill="#fff"/><circle cx="12" cy="16" r="3.800" fill="#fff"/></svg>
<span class="t" style="left:861.9px;top:811.90px;font-size:20.6px;color:#027d1e;letter-spacing:-0.075px;font-weight:bold;">Save as</span>
<svg style="left:2797.9px;top:850.9px;" width="17" height="21" viewBox="0 0 17 21" preserveAspectRatio="none"><path d="M0 0H17V4.300H6.800L14 10.500 6.800 16.700H17V21H0V17.500L8 10.500 0 3.500z" fill="#027d1e"/></svg>
<svg style="left:2838px;top:849.6px;" width="28.4" height="25" viewBox="0 0 28.4 25" preserveAspectRatio="none"><path d="M0 11.800C3.600 5.200 8.800 2.200 14.200 2.200s10.600 3 14.200 9.600c-3.600 6.600-8.800 9.600-14.200 9.600S3.600 18.400 0 11.800z" fill="#027d1e"/><circle cx="14.200" cy="11.800" r="6" fill="#fff"/><path d="M14.200 8.200a3.600 3.600 0 1 1-3.600 3.600c1.800 0.400 3.600-1 3.600-3.600z" fill="#027d1e"/><path d="M4.400-1.400 27.400 22.600" stroke="#fff" stroke-width="2.600"/><path d="M2.600 0.600 25.600 24.600" stroke="#027d1e" stroke-width="2.800"/></svg>
<div style="left:678px;top:905.6px;width:2205px;height:1.5px;background:#e3e3e3"></div>
<div style="left:678px;top:969.5px;width:116.29999999999995px;height:1.3px;background:#222"></div>
<div style="left:797.2px;top:969.5px;width:474.29999999999995px;height:1.3px;background:#222"></div>
<div style="left:1273.4px;top:969.5px;width:253.5999999999999px;height:1.3px;background:#222"></div>
<div style="left:1529.3px;top:969.5px;width:75.70000000000005px;height:1.3px;background:#222"></div>
<div style="left:1607.4px;top:969.5px;width:253.0px;height:1.3px;background:#222"></div>
<div style="left:1862.4px;top:969.5px;width:253.5999999999999px;height:1.3px;background:#222"></div>
<div style="left:2118.9px;top:969.5px;width:252.4000000000001px;height:1.3px;background:#222"></div>
<div style="left:2373.9px;top:969.5px;width:252.0px;height:1.3px;background:#222"></div>
<div style="left:2628.8px;top:969.5px;width:253.79999999999973px;height:1.3px;background:#222"></div>
<svg style="left:695px;top:926.6px;" width="26" height="26" viewBox="0 0 26 26" preserveAspectRatio="none"><rect x="1.2" y="1.2" width="23.6" height="23.6" fill="#fff" stroke="#6c6c6c" stroke-width="2.4"/></svg>
<span class="t" style="left:811.9px;top:929.30px;font-size:21.2px;color:#1a1a1a;letter-spacing:0.617px;">Summary</span>
<svg style="left:913.8px;top:935.4px;" width="16.4" height="10.2" viewBox="0 0 16.4 10.2" preserveAspectRatio="none"><path d="M2 2 L8.2 8.2 L14.4 2" fill="none" stroke="#1a1a1a" stroke-width="2.5" stroke-linecap="butt" stroke-linejoin="miter"/></svg>
<span class="t" style="left:1288.3px;top:929.30px;font-size:21.2px;color:#1a1a1a;letter-spacing:0.44px;">Status</span>
<svg style="left:1359.0px;top:935.4px;" width="16.4" height="10.2" viewBox="0 0 16.4 10.2" preserveAspectRatio="none"><path d="M2 2 L8.2 8.2 L14.4 2" fill="none" stroke="#1a1a1a" stroke-width="2.5" stroke-linecap="butt" stroke-linejoin="miter"/></svg>
<div style="left:1529.3px;top:920px;width:75.9px;height:44px;overflow:hidden"><div style="left:-1529.3px;top:-920px;width:3000px;height:1000px">
<span class="t" style="left:1544.15px;top:929.30px;font-size:21.2px;color:#1a1a1a;letter-spacing:0.883px;">Priorit</span>
</div></div>
<span class="t" style="left:1623.4px;top:929.30px;font-size:21.2px;color:#1a1a1a;letter-spacing:0.18px;">Assigned to</span>
<svg style="left:1743.3px;top:935.4px;" width="16.4" height="10.2" viewBox="0 0 16.4 10.2" preserveAspectRatio="none"><path d="M2 2 L8.2 8.2 L14.4 2" fill="none" stroke="#1a1a1a" stroke-width="2.5" stroke-linecap="butt" stroke-linejoin="miter"/></svg>
<span class="t" style="left:1876.95px;top:929.30px;font-size:21.2px;color:#1a1a1a;letter-spacing:0.83px;">Modified by</span>
<svg style="left:2001.3999999999999px;top:935.4px;" width="16.4" height="10.2" viewBox="0 0 16.4 10.2" preserveAspectRatio="none"><path d="M2 2 L8.2 8.2 L14.4 2" fill="none" stroke="#1a1a1a" stroke-width="2.5" stroke-linecap="butt" stroke-linejoin="miter"/></svg>
<span class="t" style="left:2133.15px;top:929.30px;font-size:21.2px;color:#1a1a1a;letter-spacing:0.942px;">Modified on/at</span>
<svg style="left:2286.3px;top:935.4px;" width="16.4" height="10.2" viewBox="0 0 16.4 10.2" preserveAspectRatio="none"><path d="M2 2 L8.2 8.2 L14.4 2" fill="none" stroke="#1a1a1a" stroke-width="2.5" stroke-linecap="butt" stroke-linejoin="miter"/></svg>
<span class="t" style="left:2388.5px;top:929.30px;font-size:21.2px;color:#1a1a1a;letter-spacing:0.695px;">Submitted by</span>
<svg style="left:2527.7000000000003px;top:935.4px;" width="16.4" height="10.2" viewBox="0 0 16.4 10.2" preserveAspectRatio="none"><path d="M2 2 L8.2 8.2 L14.4 2" fill="none" stroke="#1a1a1a" stroke-width="2.5" stroke-linecap="butt" stroke-linejoin="miter"/></svg>
<span class="t" style="left:2644.3px;top:929.30px;font-size:21.2px;color:#1a1a1a;letter-spacing:0.818px;">Submitted on/at</span>
<svg style="left:2811.8px;top:935.4px;" width="16.4" height="10.2" viewBox="0 0 16.4 10.2" preserveAspectRatio="none"><path d="M2 2 L8.2 8.2 L14.4 2" fill="none" stroke="#1a1a1a" stroke-width="2.5" stroke-linecap="butt" stroke-linejoin="miter"/></svg>
<svg style="left:693px;top:992.9000000000001px;" width="25.8" height="25.8" viewBox="0 0 25.8 25.8" preserveAspectRatio="none"><rect x="1.2" y="1.2" width="23.400000000000002" height="23.400000000000002" fill="#fff" stroke="#6c6c6c" stroke-width="2.4"/></svg>
<svg style="left:814px;top:988.8000000000001px;" width="25.4" height="27" viewBox="0 0 25.4 27" preserveAspectRatio="none"><circle cx="12.7" cy="4.3" r="3.7" fill="#a80019"/><path d="M0.600 9.600 12.700 15 24.800 9.600v12.800L12.700 26.800 0.600 22.400z" fill="#a80019"/><path d="M12.700 15v11" stroke="#fff" stroke-width="0.800"/></svg>
<span class="t" style="left:844.7px;top:991.30px;font-size:20.6px;color:#1670b4;letter-spacing:0.239px;">[US-15836]</span>
<div style="left:940px;top:978.20px;width:333.1px;height:50px;overflow:hidden"><div style="left:-940px;top:-978.20px;width:3000px;height:1800px">
<span class="t" style="left:960.45px;top:991.00px;font-size:21.2px;color:#1f1f1f;letter-spacing:0.925px;">My Item</span>
</div></div>
<div style="left:1287.9px;top:993.8000000000001px;width:225px;height:23px;background:#a80019;border-radius:4.600px"></div>
<span class="t" style="left:1379.9px;top:997.60px;font-size:16.4px;color:#fff;letter-spacing:0.167px;font-weight:bold;">ToDo</span>
<div style="left:1546px;top:994px;width:26px;height:2.6px;background:#2fc243"></div>
<div style="left:1546px;top:1001px;width:26px;height:2.6px;background:#2fc243"></div>
<div style="left:1546px;top:1008px;width:26px;height:2.6px;background:#2fc243"></div>
<div style="left:1622px;top:1008px;width:5px;height:2px;background:#8a8a8a"></div>
<div style="left:1629px;top:1008px;width:5px;height:2px;background:#8a8a8a"></div>
<span class="t" style="left:1876.35px;top:995.40px;font-size:21.2px;color:#1670b4;letter-spacing:0.355px;">bmihaiciuc@iqnox.com</span>
<span class="t" style="left:2132.0px;top:995.40px;font-size:21.2px;color:#1f1f1f;letter-spacing:-0.241px;">Sep 29 10:20</span>
<span class="t" style="left:2387.35px;top:995.40px;font-size:21.2px;color:#1670b4;letter-spacing:0.355px;">bmihaiciuc@iqnox.com</span>
<span class="t" style="left:2643.0px;top:995.40px;font-size:21.2px;color:#1f1f1f;letter-spacing:-0.218px;">Sep 29 10:12</span>
<div style="left:678px;top:1038.91px;width:2205px;height:1.5px;background:#dedede"></div>
<svg style="left:693px;top:1062.3100000000002px;" width="25.8" height="25.8" viewBox="0 0 25.8 25.8" preserveAspectRatio="none"><rect x="1.2" y="1.2" width="23.400000000000002" height="23.400000000000002" fill="#fff" stroke="#6c6c6c" stroke-width="2.4"/></svg>
<svg style="left:813.6px;top:1058.6100000000001px;" width="26" height="26" viewBox="0 0 26 26" preserveAspectRatio="none"><circle cx="13" cy="13" r="13" fill="#a80019"/><path d="M11.200 5.400h3.600l-.5 9.600h-2.600z" fill="#fff"/><rect x="11.300" y="17.200" width="3.400" height="3.400" fill="#fff"/></svg>
<span class="t" style="left:844.7px;top:1060.71px;font-size:20.6px;color:#1670b4;letter-spacing:0.471px;">[Issue1-5018]</span>
<div style="left:940px;top:1047.61px;width:333.1px;height:50px;overflow:hidden"><div style="left:-940px;top:-1047.61px;width:3000px;height:1800px">
<span class="t" style="left:984.0px;top:1060.41px;font-size:21.2px;color:#1f1f1f;letter-spacing:-0.18px;">Issue1</span>
</div></div>
<div style="left:1287.9px;top:1063.21px;width:225px;height:23px;background:#a80019;border-radius:4.600px"></div>
<span class="t" style="left:1381.8px;top:1067.01px;font-size:16.4px;color:#fff;letter-spacing:1.1px;font-weight:bold;">New</span>
<div style="left:1550px;top:1070px;width:18px;height:3px;background:#8c8c8c"></div>
<div style="left:1622px;top:1077px;width:5px;height:2px;background:#333"></div>
<div style="left:1629px;top:1077px;width:5px;height:2px;background:#333"></div>
<span class="t" style="left:1876.35px;top:1064.81px;font-size:21.2px;color:#1670b4;letter-spacing:0.889px;">iqnoxadmin</span>
<span class="t" style="left:2132.0px;top:1064.81px;font-size:21.2px;color:#1f1f1f;letter-spacing:-0.218px;">Sep 17 08:21</span>
<span class="t" style="left:2387.35px;top:1064.81px;font-size:21.2px;color:#1670b4;letter-spacing:0.889px;">iqnoxadmin</span>
<span class="t" style="left:2643.0px;top:1064.81px;font-size:21.2px;color:#1f1f1f;letter-spacing:-0.218px;">Sep 17 08:21</span>
<div style="left:678px;top:1108.32px;width:2205px;height:1.5px;background:#dedede"></div>
<svg style="left:693px;top:1131.72px;" width="25.8" height="25.8" viewBox="0 0 25.8 25.8" preserveAspectRatio="none"><rect x="1.2" y="1.2" width="23.400000000000002" height="23.400000000000002" fill="#fff" stroke="#6c6c6c" stroke-width="2.4"/></svg>
<svg style="left:814.4px;top:1128.42px;" width="25" height="24" viewBox="0 0 25 24" preserveAspectRatio="none"><rect x="0" y="1" width="10" height="10" fill="#a80019"/><rect x="0" y="13.400" width="10" height="10" fill="#a80019"/><rect x="13" y="13.400" width="10.600" height="10" fill="#a80019"/><path d="M18.300 0 24.600 6 18.300 12 12 6z" fill="#a80019"/></svg>
<span class="t" style="left:844.7px;top:1130.12px;font-size:20.6px;color:#1670b4;letter-spacing:-0.627px;">[TESTSET-5016]</span>
<div style="left:940px;top:1117.02px;width:333.1px;height:50px;overflow:hidden"><div style="left:-940px;top:-1117.02px;width:3000px;height:1800px">
<span class="t" style="left:1003.1px;top:1129.82px;font-size:21.2px;color:#1f1f1f;letter-spacing:-0.2px;">TestSet1</span>
</div></div>
<div style="left:1287.9px;top:1132.62px;width:225px;height:23px;background:#a80019;border-radius:4.600px"></div>
<span class="t" style="left:1381.8px;top:1136.42px;font-size:16.4px;color:#fff;letter-spacing:1.1px;font-weight:bold;">New</span>
<div style="left:1544px;top:1147px;width:5px;height:2px;background:#333"></div>
<div style="left:1551px;top:1147px;width:5px;height:2px;background:#333"></div>
<div style="left:1622px;top:1147px;width:5px;height:2px;background:#333"></div>
<div style="left:1629px;top:1147px;width:5px;height:2px;background:#333"></div>
<span class="t" style="left:1876.35px;top:1134.22px;font-size:21.2px;color:#1670b4;letter-spacing:0.889px;">iqnoxadmin</span>
<span class="t" style="left:2132.0px;top:1134.22px;font-size:21.2px;color:#1f1f1f;letter-spacing:-0.218px;">Sep 17 08:21</span>
<span class="t" style="left:2387.35px;top:1134.22px;font-size:21.2px;color:#1670b4;letter-spacing:0.889px;">iqnoxadmin</span>
<span class="t" style="left:2643.0px;top:1134.22px;font-size:21.2px;color:#1f1f1f;letter-spacing:-0.218px;">Sep 17 08:21</span>
<div style="left:678px;top:1177.73px;width:2205px;height:1.5px;background:#dedede"></div>
<svg style="left:693px;top:1201.13px;" width="25.8" height="25.8" viewBox="0 0 25.8 25.8" preserveAspectRatio="none"><rect x="1.2" y="1.2" width="23.400000000000002" height="23.400000000000002" fill="#fff" stroke="#6c6c6c" stroke-width="2.4"/></svg>
<svg style="left:812.6px;top:1196.43px;" width="28" height="28" viewBox="0 0 28 28" preserveAspectRatio="none"><circle cx="14" cy="14" r="9.400" fill="none" stroke="#a80019" stroke-width="2.300"/><circle cx="14" cy="14" r="4.700" fill="#a80019"/><path d="M14 0.400v4.800M14 22.800v4.800M0.400 14h4.800M22.800 14h4.800" stroke="#a80019" stroke-width="2.300"/></svg>
<span class="t" style="left:844.7px;top:1199.53px;font-size:20.6px;color:#1670b4;letter-spacing:-0.729px;">[TESTCASE-5014]</span>
<div style="left:940px;top:1186.43px;width:333.1px;height:50px;overflow:hidden"><div style="left:-940px;top:-1186.43px;width:3000px;height:1800px">
<span class="t" style="left:1018.8px;top:1199.23px;font-size:21.2px;color:#1f1f1f;letter-spacing:-0.355px">Test Case 8: Ensure MFA Mandatory</span>
</div></div>
<div style="left:1287.9px;top:1202.03px;width:225px;height:23px;background:#a80019;border-radius:4.600px"></div>
<span class="t" style="left:1381.8px;top:1205.83px;font-size:16.4px;color:#fff;letter-spacing:1.1px;font-weight:bold;">New</span>
<div style="left:1544px;top:1216px;width:5px;height:2px;background:#333"></div>
<div style="left:1551px;top:1216px;width:5px;height:2px;background:#333"></div>
<div style="left:1622px;top:1216px;width:5px;height:2px;background:#333"></div>
<div style="left:1629px;top:1216px;width:5px;height:2px;background:#333"></div>
<span class="t" style="left:1876.35px;top:1203.63px;font-size:21.2px;color:#1670b4;letter-spacing:0.889px;">iqnoxadmin</span>
<span class="t" style="left:2132.0px;top:1203.63px;font-size:21.2px;color:#1f1f1f;letter-spacing:-0.218px;">Sep 17 08:21</span>
<span class="t" style="left:2387.35px;top:1203.63px;font-size:21.2px;color:#1670b4;letter-spacing:0.889px;">iqnoxadmin</span>
<span class="t" style="left:2643.0px;top:1203.63px;font-size:21.2px;color:#1f1f1f;letter-spacing:-0.218px;">Sep 17 08:21</span>
<div style="left:678px;top:1247.14px;width:2205px;height:1.5px;background:#dedede"></div>
<svg style="left:693px;top:1270.5400000000002px;" width="25.8" height="25.8" viewBox="0 0 25.8 25.8" preserveAspectRatio="none"><rect x="1.2" y="1.2" width="23.400000000000002" height="23.400000000000002" fill="#fff" stroke="#6c6c6c" stroke-width="2.4"/></svg>
<svg style="left:812.6px;top:1265.8400000000001px;" width="28" height="28" viewBox="0 0 28 28" preserveAspectRatio="none"><circle cx="14" cy="14" r="9.400" fill="none" stroke="#a80019" stroke-width="2.300"/><circle cx="14" cy="14" r="4.700" fill="#a80019"/><path d="M14 0.400v4.800M14 22.800v4.800M0.400 14h4.800M22.800 14h4.800" stroke="#a80019" stroke-width="2.300"/></svg>
<span class="t" style="left:844.7px;top:1268.94px;font-size:20.6px;color:#1670b4;letter-spacing:-0.729px;">[TESTCASE-5012]</span>
<div style="left:940px;top:1255.84px;width:333.1px;height:50px;overflow:hidden"><div style="left:-940px;top:-1255.84px;width:3000px;height:1800px">
<span class="t" style="left:1018.8px;top:1268.64px;font-size:21.2px;color:#1f1f1f;letter-spacing:-0.19px">Test Case 7: Validate MFA Integration</span>
</div></div>
<div style="left:1287.9px;top:1271.44px;width:225px;height:23px;background:#a80019;border-radius:4.600px"></div>
<span class="t" style="left:1381.8px;top:1275.24px;font-size:16.4px;color:#fff;letter-spacing:1.1px;font-weight:bold;">New</span>
<div style="left:1544px;top:1285px;width:5px;height:2px;background:#333"></div>
<div style="left:1551px;top:1285px;width:5px;height:2px;background:#333"></div>
<div style="left:1622px;top:1285px;width:5px;height:2px;background:#333"></div>
<div style="left:1629px;top:1285px;width:5px;height:2px;background:#333"></div>
<span class="t" style="left:1876.35px;top:1273.04px;font-size:21.2px;color:#1670b4;letter-spacing:0.889px;">iqnoxadmin</span>
<span class="t" style="left:2132.0px;top:1273.04px;font-size:21.2px;color:#1f1f1f;letter-spacing:-0.218px;">Sep 17 08:21</span>
<span class="t" style="left:2387.35px;top:1273.04px;font-size:21.2px;color:#1670b4;letter-spacing:0.889px;">iqnoxadmin</span>
<span class="t" style="left:2643.0px;top:1273.04px;font-size:21.2px;color:#1f1f1f;letter-spacing:-0.218px;">Sep 17 08:21</span>
<div style="left:678px;top:1316.55px;width:2205px;height:1.5px;background:#dedede"></div>
<svg style="left:693px;top:1339.95px;" width="25.8" height="25.8" viewBox="0 0 25.8 25.8" preserveAspectRatio="none"><rect x="1.2" y="1.2" width="23.400000000000002" height="23.400000000000002" fill="#fff" stroke="#6c6c6c" stroke-width="2.4"/></svg>
<svg style="left:812.6px;top:1335.25px;" width="28" height="28" viewBox="0 0 28 28" preserveAspectRatio="none"><circle cx="14" cy="14" r="9.400" fill="none" stroke="#a80019" stroke-width="2.300"/><circle cx="14" cy="14" r="4.700" fill="#a80019"/><path d="M14 0.400v4.800M14 22.800v4.800M0.400 14h4.800M22.800 14h4.800" stroke="#a80019" stroke-width="2.300"/></svg>
<span class="t" style="left:844.7px;top:1338.35px;font-size:20.6px;color:#1670b4;letter-spacing:-0.729px;">[TESTCASE-5010]</span>
<div style="left:940px;top:1325.25px;width:333.1px;height:50px;overflow:hidden"><div style="left:-940px;top:-1325.25px;width:3000px;height:1800px">
<span class="t" style="left:1018.8px;top:1338.05px;font-size:21.2px;color:#1f1f1f;letter-spacing:-0.165px">Test Case 6: Confirm MFA Is Enabled</span>
</div></div>
<div style="left:1287.9px;top:1340.85px;width:225px;height:23px;background:#a80019;border-radius:4.600px"></div>
<span class="t" style="left:1381.8px;top:1344.65px;font-size:16.4px;color:#fff;letter-spacing:1.1px;font-weight:bold;">New</span>
<div style="left:1544px;top:1355px;width:5px;height:2px;background:#8a8a8a"></div>
<div style="left:1551px;top:1355px;width:5px;height:2px;background:#8a8a8a"></div>
<div style="left:1622px;top:1355px;width:5px;height:2px;background:#8a8a8a"></div>
<div style="left:1629px;top:1355px;width:5px;height:2px;background:#8a8a8a"></div>
<span class="t" style="left:1876.35px;top:1342.45px;font-size:21.2px;color:#1670b4;letter-spacing:0.889px;">iqnoxadmin</span>
<span class="t" style="left:2132.0px;top:1342.45px;font-size:21.2px;color:#1f1f1f;letter-spacing:-0.218px;">Sep 17 08:21</span>
<span class="t" style="left:2387.35px;top:1342.45px;font-size:21.2px;color:#1670b4;letter-spacing:0.889px;">iqnoxadmin</span>
<span class="t" style="left:2643.0px;top:1342.45px;font-size:21.2px;color:#1f1f1f;letter-spacing:-0.218px;">Sep 17 08:21</span>
<div style="left:678px;top:1385.96px;width:2205px;height:1.5px;background:#dedede"></div>
<svg style="left:693px;top:1409.3600000000001px;" width="25.8" height="25.8" viewBox="0 0 25.8 25.8" preserveAspectRatio="none"><rect x="1.2" y="1.2" width="23.400000000000002" height="23.400000000000002" fill="#fff" stroke="#6c6c6c" stroke-width="2.4"/></svg>
<svg style="left:812.6px;top:1404.66px;" width="28" height="28" viewBox="0 0 28 28" preserveAspectRatio="none"><circle cx="14" cy="14" r="9.400" fill="none" stroke="#a80019" stroke-width="2.300"/><circle cx="14" cy="14" r="4.700" fill="#a80019"/><path d="M14 0.400v4.800M14 22.800v4.800M0.400 14h4.800M22.800 14h4.800" stroke="#a80019" stroke-width="2.300"/></svg>
<span class="t" style="left:844.7px;top:1407.76px;font-size:20.6px;color:#1670b4;letter-spacing:-0.729px;">[TESTCASE-5008]</span>
<div style="left:940px;top:1394.66px;width:333.1px;height:50px;overflow:hidden"><div style="left:-940px;top:-1394.66px;width:3000px;height:1800px">
<span class="t" style="left:1018.8px;top:1407.46px;font-size:21.2px;color:#1f1f1f;letter-spacing:-0.06px;">Test Case 5: Verify Default</span>
</div></div>
<div style="left:1287.9px;top:1410.26px;width:225px;height:23px;background:#a80019;border-radius:4.600px"></div>
<span class="t" style="left:1381.8px;top:1414.06px;font-size:16.4px;color:#fff;letter-spacing:1.1px;font-weight:bold;">New</span>
<div style="left:1544px;top:1424px;width:5px;height:2px;background:#333"></div>
<div style="left:1551px;top:1424px;width:5px;height:2px;background:#333"></div>
<div style="left:1622px;top:1424px;width:5px;height:2px;background:#333"></div>
<div style="left:1629px;top:1424px;width:5px;height:2px;background:#333"></div>
<span class="t" style="left:1876.35px;top:1411.86px;font-size:21.2px;color:#1670b4;letter-spacing:0.889px;">iqnoxadmin</span>
<span class="t" style="left:2132.0px;top:1411.86px;font-size:21.2px;color:#1f1f1f;letter-spacing:-0.218px;">Sep 17 08:21</span>
<span class="t" style="left:2387.35px;top:1411.86px;font-size:21.2px;color:#1670b4;letter-spacing:0.889px;">iqnoxadmin</span>
<span class="t" style="left:2643.0px;top:1411.86px;font-size:21.2px;color:#1f1f1f;letter-spacing:-0.218px;">Sep 17 08:21</span>
<div style="left:678px;top:1455.3700000000001px;width:2205px;height:1.5px;background:#dedede"></div>
<svg style="left:693px;top:1478.7700000000002px;" width="25.8" height="25.8" viewBox="0 0 25.8 25.8" preserveAspectRatio="none"><rect x="1.2" y="1.2" width="23.400000000000002" height="23.400000000000002" fill="#fff" stroke="#6c6c6c" stroke-width="2.4"/></svg>
<svg style="left:812.6px;top:1474.0700000000002px;" width="28" height="28" viewBox="0 0 28 28" preserveAspectRatio="none"><circle cx="14" cy="14" r="9.400" fill="none" stroke="#a80019" stroke-width="2.300"/><circle cx="14" cy="14" r="4.700" fill="#a80019"/><path d="M14 0.400v4.800M14 22.800v4.800M0.400 14h4.800M22.800 14h4.800" stroke="#a80019" stroke-width="2.300"/></svg>
<span class="t" style="left:844.7px;top:1477.17px;font-size:20.6px;color:#1670b4;letter-spacing:-0.729px;">[TESTCASE-5006]</span>
<div style="left:940px;top:1464.07px;width:333.1px;height:50px;overflow:hidden"><div style="left:-940px;top:-1464.07px;width:3000px;height:1800px">
<span class="t" style="left:1018.8px;top:1476.87px;font-size:21.2px;color:#1f1f1f;letter-spacing:-0.116px;">Test Case 4: Validate User</span>
</div></div>
<div style="left:1287.9px;top:1479.67px;width:225px;height:23px;background:#a80019;border-radius:4.600px"></div>
<span class="t" style="left:1381.8px;top:1483.47px;font-size:16.4px;color:#fff;letter-spacing:1.1px;font-weight:bold;">New</span>
<div style="left:1544px;top:1494px;width:5px;height:2px;background:#333"></div>
<div style="left:1551px;top:1494px;width:5px;height:2px;background:#333"></div>
<div style="left:1622px;top:1494px;width:5px;height:2px;background:#333"></div>
<div style="left:1629px;top:1494px;width:5px;height:2px;background:#333"></div>
<span class="t" style="left:1876.35px;top:1481.27px;font-size:21.2px;color:#1670b4;letter-spacing:0.889px;">iqnoxadmin</span>
<span class="t" style="left:2132.0px;top:1481.27px;font-size:21.2px;color:#1f1f1f;letter-spacing:-0.218px;">Sep 17 08:21</span>
<span class="t" style="left:2387.35px;top:1481.27px;font-size:21.2px;color:#1670b4;letter-spacing:0.889px;">iqnoxadmin</span>
<span class="t" style="left:2643.0px;top:1481.27px;font-size:21.2px;color:#1f1f1f;letter-spacing:-0.218px;">Sep 17 08:21</span>
<div style="left:678px;top:1524.78px;width:2205px;height:1.5px;background:#dedede"></div>
<svg style="left:693px;top:1548.18px;" width="25.8" height="25.8" viewBox="0 0 25.8 25.8" preserveAspectRatio="none"><rect x="1.2" y="1.2" width="23.400000000000002" height="23.400000000000002" fill="#fff" stroke="#6c6c6c" stroke-width="2.4"/></svg>
<svg style="left:812.6px;top:1543.48px;" width="28" height="28" viewBox="0 0 28 28" preserveAspectRatio="none"><circle cx="14" cy="14" r="9.400" fill="none" stroke="#a80019" stroke-width="2.300"/><circle cx="14" cy="14" r="4.700" fill="#a80019"/><path d="M14 0.400v4.800M14 22.800v4.800M0.400 14h4.800M22.800 14h4.800" stroke="#a80019" stroke-width="2.300"/></svg>
<span class="t" style="left:844.7px;top:1546.58px;font-size:20.6px;color:#1670b4;letter-spacing:-0.729px;">[TESTCASE-5004]</span>
<div style="left:940px;top:1533.48px;width:333.1px;height:50px;overflow:hidden"><div style="left:-940px;top:-1533.48px;width:3000px;height:1800px">
<span class="t" style="left:1018.8px;top:1546.28px;font-size:21.2px;color:#1f1f1f;letter-spacing:-0.289px">Test Case 3: Ensure Exclusive</span>
</div></div>
<div style="left:1287.9px;top:1549.08px;width:225px;height:23px;background:#a80019;border-radius:4.600px"></div>
<span class="t" style="left:1381.8px;top:1552.88px;font-size:16.4px;color:#fff;letter-spacing:1.1px;font-weight:bold;">New</span>
<div style="left:1544px;top:1563px;width:5px;height:2px;background:#333"></div>
<div style="left:1551px;top:1563px;width:5px;height:2px;background:#333"></div>
<div style="left:1622px;top:1563px;width:5px;height:2px;background:#333"></div>
<div style="left:1629px;top:1563px;width:5px;height:2px;background:#333"></div>
<span class="t" style="left:1876.35px;top:1550.68px;font-size:21.2px;color:#1670b4;letter-spacing:0.889px;">iqnoxadmin</span>
<span class="t" style="left:2132.0px;top:1550.68px;font-size:21.2px;color:#1f1f1f;letter-spacing:-0.218px;">Sep 17 08:21</span>
<span class="t" style="left:2387.35px;top:1550.68px;font-size:21.2px;color:#1670b4;letter-spacing:0.889px;">iqnoxadmin</span>
<span class="t" style="left:2643.0px;top:1550.68px;font-size:21.2px;color:#1f1f1f;letter-spacing:-0.218px;">Sep 17 08:21</span>
</div></div></body></html>
